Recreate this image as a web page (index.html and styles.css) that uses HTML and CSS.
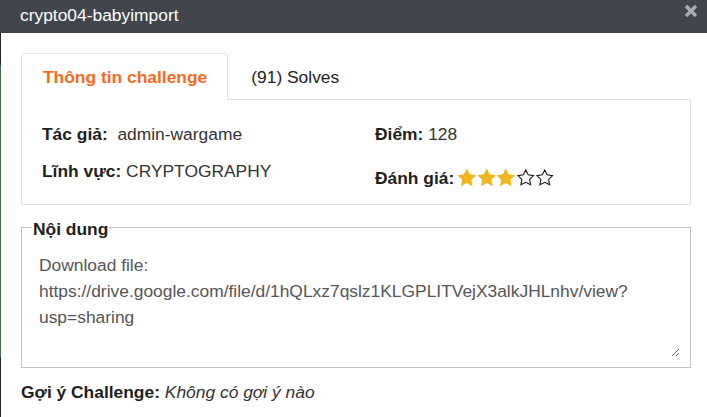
FILE: index.html
```html
<!DOCTYPE html>
<html lang="vi">
<head>
<meta charset="utf-8">
<title>crypto04-babyimport</title>
<link rel="stylesheet" href="styles.css">
</head>
<body>
<div class="modal">
  <header class="modal-header">
    <h1 class="title">crypto04-babyimport</h1>
    <button class="close" type="button" aria-label="Close">
      <svg width="14" height="14" viewBox="0 0 14 14"><path d="M2 2 L12 12 M12 2 L2 12" stroke="#a9acb1" stroke-width="3.4" fill="none"/></svg>
    </button>
  </header>
  <div class="modal-body">
    <ul class="tabs">
      <li class="tab active">Thông tin challenge</li>
      <li class="tab">(91) Solves</li>
    </ul>
    <div class="panel">
      <div class="info-grid">
        <div class="cell"><b>Tác giả:</b>&nbsp; admin-wargame</div>
        <div class="cell"><b>Điểm:</b> 128</div>
        <div class="cell"><b>Lĩnh vực:</b> CRYPTOGRAPHY</div>
        <div class="cell rating"><b>Đánh giá:</b><span class="stars">
          <svg class="star" viewBox="1.5 1.5 21 21"><polygon class="full" points="12,2 15.09,8.26 22,9.27 17,14.14 18.18,21.02 12,17.77 5.82,21.02 7,14.14 2,9.27 8.91,8.26"/></svg><svg class="star" viewBox="1.5 1.5 21 21"><polygon class="full" points="12,2 15.09,8.26 22,9.27 17,14.14 18.18,21.02 12,17.77 5.82,21.02 7,14.14 2,9.27 8.91,8.26"/></svg><svg class="star" viewBox="1.5 1.5 21 21"><polygon class="full" points="12,2 15.09,8.26 22,9.27 17,14.14 18.18,21.02 12,17.77 5.82,21.02 7,14.14 2,9.27 8.91,8.26"/></svg><svg class="star" viewBox="-0.5 -0.5 25 25"><polygon class="empty" points="12,2 15.09,8.26 22,9.27 17,14.14 18.18,21.02 12,17.77 5.82,21.02 7,14.14 2,9.27 8.91,8.26"/></svg><svg class="star" viewBox="-0.5 -0.5 25 25"><polygon class="empty" points="12,2 15.09,8.26 22,9.27 17,14.14 18.18,21.02 12,17.77 5.82,21.02 7,14.14 2,9.27 8.91,8.26"/></svg>
        </span></div>
      </div>
    </div>
    <fieldset class="content-box">
      <legend>Nội dung</legend>
      <textarea class="content-text" readonly>Download file:
https://drive.google.com/file/d/1hQLxz7qslz1KLGPLITVejX3alkJHLnhv/view?
usp=sharing</textarea>
    </fieldset>
    <p class="hint"><b>Gợi ý Challenge:</b> <i>Không có gợi ý nào</i></p>
  </div>
</div>
</body>
</html>
```
FILE: styles.css
```css
* { box-sizing: border-box; }
html, body { margin: 0; padding: 0; }
body {
  font-family: "Liberation Sans", Arial, sans-serif;
  font-size: 17.4px;
  color: #333;
  background: linear-gradient(to bottom, #2a2d31 0, #1f2327 64px, #4d6b4c 66px, #4d6b4c 356px, #202224 358px);
  height: 417px;
  overflow: hidden;
}
.modal { background: transparent; }
.modal-header {
  display: flex;
  height: 33px;
  padding: 5px 9px 0 20px;
  background: #41464e;
}
.title {
  margin: 0;
  font-size: 17.4px;
  font-weight: normal;
  line-height: 20px;
  color: #fff;
}
.close {
  margin-left: auto;
  margin-top: -1px;
  align-self: flex-start;
  padding: 0;
  border: 0;
  background: none;
  width: 14px;
  height: 14px;
  display: block;
}
.close svg { display: block; }
.modal-body {
  margin-left: 1px;
  padding: 20px 16px 20px 20px;
  background: #fff;
  height: 384px;
}
.tabs {
  display: flex;
  margin: 0;
  padding: 0;
  list-style: none;
  border-bottom: 1px solid #dee2e6;
}
.tab {
  padding: 14px 22px 13px 22px;
  line-height: 18px;
  color: #222;
  border: 1px solid transparent;
  margin-bottom: -1px;
}
.tab.active {
  padding-left: 21px;
  padding-right: 20px;
  color: #fa6a1c;
  font-weight: bold;
  background: #fff;
  border-color: #dee2e6 #dee2e6 #fff;
  border-radius: 4px 4px 0 0;
}
.panel {
  border: 1px solid #dee2e6;
  border-top: 0;
  padding: 24px 20px 16px 20px;
}
.info-grid {
  display: grid;
  grid-template-columns: 333px 1fr;
  row-gap: 17px;
  line-height: 20px;
}
.cell b { color: #1e1e1e; }
.rating {
  margin-top: 7px;
  display: flex;
  align-items: center;
  height: 20px;
}
.stars { display: flex; margin-left: 3px; }
.star { width: 19.5px; height: 19.5px; display: block; }
.full { fill: #f2b51e; }
.empty { fill: #fff; stroke: #1a1a1a; stroke-width: 1.4; stroke-linejoin: miter; }
.content-box {
  margin: 11px 0 0 0;
  padding: 0 10px 10px 10px;
  border: 1px solid #c0c0c0;
  min-width: 0;
}
.content-box legend {
  padding: 3px 1px 0 1px;
  font-weight: bold;
  line-height: 20px;
  color: #1e1e1e;
}
.content-text {
  display: block;
  width: 100%;
  height: 118px;
  margin: 0;
  padding: 13px 7px 0 7px;
  border: 0;
  outline: none;
  resize: vertical;
  font-family: "Liberation Sans", Arial, sans-serif;
  font-size: 17.4px;
  line-height: 26px;
  color: #555;
  background: #fff;
  overflow: hidden;
}
.hint {
  margin: 14px 0 0 0;
  line-height: 20px;
  color: #333;
}
.hint b { color: #1e1e1e; }
```
